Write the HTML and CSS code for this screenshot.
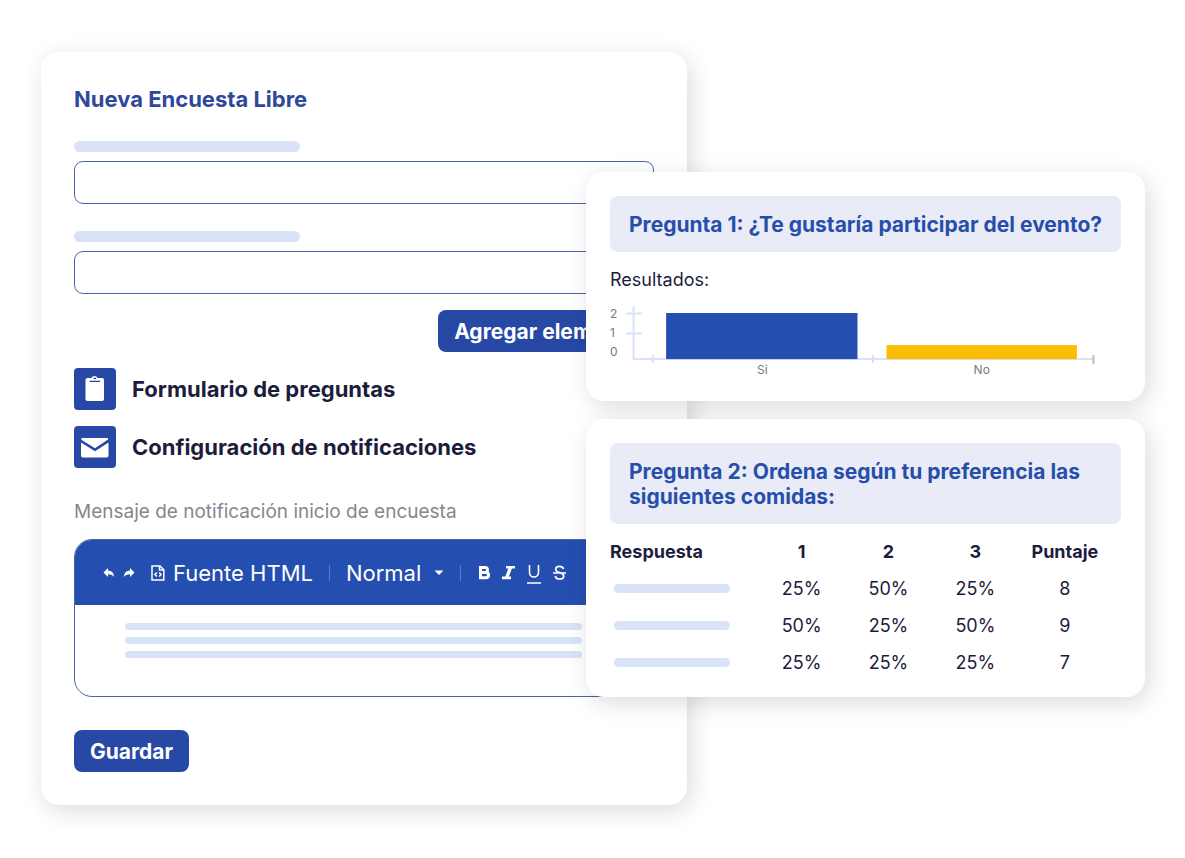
FILE: index.html
```
<!DOCTYPE html>
<html lang="es">
<head>
  <meta charset="UTF-8" />
  <meta name="viewport" content="width=device-width, initial-scale=1.0"/>
  <title>Nueva Encuesta Libre</title>
  <link rel="stylesheet" href="styles.css">
</head>
<body>
  <main class="board">
    <form class="card survey">
      <h1 class="title">Nueva Encuesta Libre</h1>

      <div class="field">
        <span class="bar label-bar"></span>
        <input class="text-input" type="text" aria-label="Nombre">
      </div>
      <div class="field">
        <span class="bar label-bar"></span>
        <input class="text-input" type="text" aria-label="Elemento">
      </div>
      <button class="button add" type="button">Agregar elemento</button>

      <div class="section">
        <span class="tile">
          <svg width="42" height="42" viewBox="0 0 42 42">
            <path fill="#fff" d="M13 10h4.500c.5-1.300 1.600-2 3-2s2.500.7 3 2H28a2 2 0 0 1 2 2V31a2 2 0 0 1-2 2H13.500a2 2 0 0 1-2-2V12a2 2 0 0 1 1.500-2z"/>
            <path fill="none" stroke="#2848a6" stroke-width="1.300" d="M15.500 13.300h10.500M19.500 10.300h2.500"/>
          </svg>
        </span>
        <h2>Formulario de preguntas</h2>
      </div>
      <div class="section">
        <span class="tile">
          <svg width="42" height="42" viewBox="0 0 42 42">
            <path fill="#fff" d="M8 12h26v1.500L21 22.300 7 13.500zM7 16.500l14 8.700 13.500-8.700V29.500a2 2 0 0 1-2 2H9a2 2 0 0 1-2-2z"/>
          </svg>
        </span>
        <h2>Configuración de notificaciones</h2>
      </div>

      <p class="hint">Mensaje de notificación inicio de encuesta</p>
      <div class="editor">
        <div class="toolbar">
          <div class="history">
            <button class="tool" type="button" aria-label="Deshacer">
              <svg width="12" height="10" viewBox="0 0 12 10"><path fill="#fff" d="M5 0v2.600c3.800.2 5.800 2.600 6 6.400C9.700 7 8 6.200 5 6.200V9L.5 4.500z"/></svg>
            </button>
            <button class="tool" type="button" aria-label="Rehacer">
              <svg width="12" height="10" viewBox="0 0 12 10"><path fill="#fff" d="M7 0v2.600C3.200 2.800 1.200 5.200 1 9c1.300-2 3-2.800 6-2.800V9l4.500-4.500z"/></svg>
            </button>
          </div>
          <button class="tool source" type="button">
            <svg width="14" height="16" viewBox="0 0 14 16" fill="none" stroke="#fff" stroke-width="1.500">
              <path d="M1 1h8l3.800 3.800V15H1z"/>
              <path d="M8.500 1v4h4"/>
              <path d="M5.800 7.500 4 9.500l1.800 2M8.200 7.500l1.800 2-1.800 2"/>
            </svg>
            Fuente HTML
          </button>
          <span class="divider"></span>
          <select class="format" aria-label="Formato">
            <option>Normal</option>
          </select>
          <svg class="caret" width="10" height="6" viewBox="0 0 10 6"><path fill="#fff" d="M.5.5h9L5 5z"/></svg>
          <span class="divider"></span>
          <div class="marks">
            <button class="tool" type="button" aria-label="Negrita">
              <svg width="13" height="20" viewBox="0 0 13 20" fill="none" stroke="#fff" stroke-width="3"><path d="M3.500 4.500H8a2.500 2.500 0 0 1 0 5H4h5a2.600 2.600 0 0 1 0 5.200H3.500z"/></svg>
            </button>
            <button class="tool" type="button" aria-label="Cursiva">
              <svg width="13" height="20" viewBox="0 0 13 20" fill="none" stroke="#fff"><path stroke-width="2.600" d="M4 4.300h9M0 14.900h9"/><path stroke-width="3.400" d="M8.500 4.500l-4 10.500"/></svg>
            </button>
            <button class="tool" type="button" aria-label="Subrayado">
              <svg width="14" height="22" viewBox="0 0 14 22" fill="none" stroke="#fff" stroke-width="1.600"><path d="M2.500 3v7.500a4.500 4.500 0 0 0 9 0V3M0 21h14"/></svg>
            </button>
            <button class="tool" type="button" aria-label="Tachado">
              <svg width="13" height="20" viewBox="0 0 13 20" fill="none" stroke="#fff" stroke-width="1.700"><path d="M10.500 6C10 4.200 8.500 3.300 6.500 3.300S2.700 4.400 2.700 6.200c0 4.500 8 2.400 8 6.700 0 1.900-1.800 3.100-4.100 3.100-2.400 0-4-1-4.300-3M0 10h13"/></svg>
            </button>
          </div>
        </div>
        <div class="message">
          <span class="bar"></span>
          <span class="bar"></span>
          <span class="bar"></span>
        </div>
      </div>
      <button class="button" type="submit">Guardar</button>
    </form>

    <div class="results">
      <section class="card result">
        <h2 class="question">Pregunta 1: ¿Te gustaría participar del evento?</h2>
        <p class="subtitle">Resultados:</p>
        <svg class="chart" viewBox="0 0 510 74">
          <g class="axis">
            <path d="M23.500 2v53H482M16 9.500h16M16 29.500h16M42.500 51v8M262.500 51v8"/>
            <path class="axis-end" d="M482.500 51v9"/>
          </g>
          <rect x="56" y="9" width="191" height="46" fill="#244eb0"/>
          <rect x="276" y="41" width="190" height="14" fill="#fbbc05"/>
          <text x="0" y="14">2</text>
          <text x="0" y="33">1</text>
          <text x="0" y="52">0</text>
          <text x="152" y="70" text-anchor="middle">Si</text>
          <text x="371" y="70" text-anchor="middle">No</text>
        </svg>
      </section>

      <section class="card result">
        <h2 class="question">Pregunta 2: Ordena según tu preferencia las siguientes comidas:</h2>
        <table class="ranking">
          <thead>
            <tr><th class="answer">Respuesta</th><th>1</th><th>2</th><th>3</th><th class="score">Puntaje</th></tr>
          </thead>
          <tbody>
            <tr><td class="answer"><span class="bar"></span></td><td>25%</td><td>50%</td><td>25%</td><td class="score">8</td></tr>
            <tr><td class="answer"><span class="bar"></span></td><td>50%</td><td>25%</td><td>50%</td><td class="score">9</td></tr>
            <tr><td class="answer"><span class="bar"></span></td><td>25%</td><td>25%</td><td>25%</td><td class="score">7</td></tr>
          </tbody>
        </table>
      </section>
    </div>
  </main>
</body>
</html>
```
FILE: styles.css
```
* {
  box-sizing: border-box;
}

body {
  margin: 0;
  font-family: Inter, "Liberation Sans", sans-serif;
  background-color: #ffffff;
  color: #1c1d3d;
}

h1, h2, p {
  margin: 0;
}

/* the results column overlaps the right edge of the form */
.board {
  display: grid;
  grid-template-columns: 545fr 101fr 458fr;
  align-items: start;
  padding: 52px 40px 52px 41px;
}

.card {
  background-color: #ffffff;
  border-radius: 18px;
  box-shadow: 4px 6px 24px rgba(0, 0, 0, 0.14);
}

.survey {
  grid-column: 1 / 3;
  grid-row: 1;
  display: flex;
  flex-direction: column;
  align-items: flex-start;
  padding: 33px;
}

.results {
  grid-column: 2 / 4;
  grid-row: 1;
  display: flex;
  flex-direction: column;
  gap: 18px;
  margin-top: 120px;
}

.title {
  font-size: 22px;
  line-height: 28px;
  color: #2f489c;
  margin-bottom: 28px;
}

.bar {
  display: block;
  height: 7px;
  border-radius: 4px;
  background-color: #dae2f8;
}

.field {
  width: 100%;
  margin-bottom: 27px;
}

.label-bar {
  width: 226px;
  height: 11px;
  margin-bottom: 9px;
  border-radius: 6px;
}

.text-input {
  display: block;
  width: 100%;
  height: 43px;
  padding: 0 16px;
  border: 1px solid #4964a8;
  border-radius: 9px;
  background-color: #ffffff;
  font: inherit;
}

.button {
  height: 42px;
  padding: 0 16px;
  border: 0;
  border-radius: 8px;
  background-color: #2848a6;
  color: #ffffff;
  font-family: inherit;
  font-size: 21px;
  font-weight: 700;
  cursor: pointer;
}

.add {
  align-self: flex-end;
  margin-top: -11px;
  margin-bottom: 16px;
}

.section {
  display: flex;
  align-items: center;
  gap: 16px;
  margin-bottom: 16px;
}

.section h2 {
  font-size: 22px;
  line-height: 28px;
}

.tile {
  height: 42px;
  border-radius: 4px;
  background-color: #2848a6;
}

.tile svg {
  display: block;
}

.hint {
  font-size: 19px;
  line-height: 24px;
  color: #85878c;
  margin: 16px 0 15px;
}

.editor {
  width: 100%;
  margin-bottom: 33px;
  border: 1px solid #4964a8;
  border-radius: 18px;
  overflow: hidden;
}

.toolbar {
  display: flex;
  align-items: center;
  height: 65px;
  padding: 0 28px;
  background-color: #244eb0;
}

.history {
  display: flex;
  gap: 8px;
  margin-right: 16px;
}

.tool {
  display: flex;
  align-items: center;
  padding: 0;
  border: 0;
  background: none;
  color: #ffffff;
  cursor: pointer;
}

.source {
  gap: 8px;
  font-family: inherit;
  font-size: 22px;
}

.divider {
  width: 1px;
  height: 16px;
  margin: 0 16px;
  background-color: #5b7bc6;
}

.format {
  appearance: none;
  width: 88px;
  padding: 0;
  border: 0;
  background: none;
  color: #ffffff;
  font-family: inherit;
  font-size: 22px;
}

.caret {
  pointer-events: none;
}

.marks {
  display: flex;
  align-items: center;
  gap: 12px;
}

.message {
  display: flex;
  flex-direction: column;
  gap: 7px;
  height: 91px;
  padding: 18px 71px 0 50px;
}

.result {
  padding: 24px 24px 16px;
}

.question {
  padding: 16px 16px 15px 19px;
  border-radius: 8px;
  background-color: #e9ecf7;
  color: #264eaa;
  font-size: 21px;
  line-height: 25px;
}

.subtitle {
  margin: 16px 0 12px;
  font-size: 18px;
  line-height: 24px;
}

.chart {
  display: block;
  width: 100%;
  margin-bottom: 7px;
}

.chart text {
  font-size: 12px;
  fill: #77797e;
}

.axis path {
  fill: none;
  stroke: #dae2f8;
  stroke-width: 2;
}

.axis .axis-end {
  stroke: #b9bcc8;
}

.ranking {
  width: 100%;
  margin-top: 9px;
  border-collapse: collapse;
  table-layout: fixed;
  font-size: 18px;
}

.ranking th,
.ranking td {
  height: 37px;
  padding: 0;
  text-align: center;
}

.ranking .answer {
  width: 29%;
  text-align: left;
}

.ranking .score {
  width: 20%;
  padding-right: 10px;
}

.ranking .bar {
  width: 116px;
  height: 9px;
  margin-left: 4px;
  border-radius: 5px;
}
```
